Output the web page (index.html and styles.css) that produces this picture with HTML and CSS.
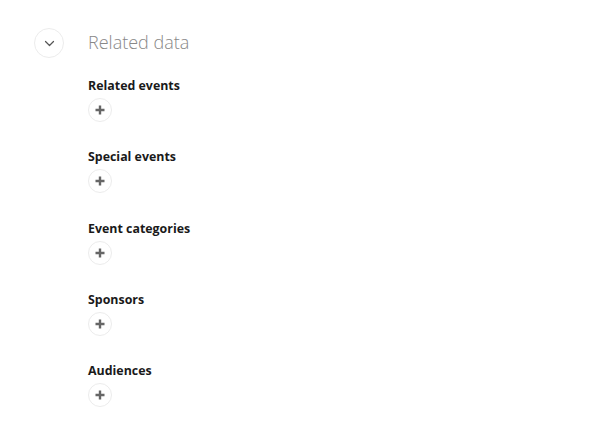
FILE: index.html
```html
<!DOCTYPE html>
<html>
<head>
<meta charset="utf-8">
<link rel="stylesheet" href="styles.css">
</head>
<body>
<section class="panel">
  <div class="panel-head">
    <button class="toggle" aria-label="Collapse">
      <svg width="11" height="7" viewBox="0 0 11 7"><path d="M1.5 1.5 L5.5 5.5 L9.5 1.5" fill="none" stroke="#555" stroke-width="1.2" stroke-linecap="round" stroke-linejoin="round"/></svg>
    </button>
    <h2 class="title">Related data</h2>
  </div>
  <div class="fields">
    <div class="field">
      <div class="label">Related events</div>
      <button class="add" aria-label="Add"><svg width="10" height="10" viewBox="0 0 10 10"><path d="M5 0.5V9.5M0.5 5H9.5" stroke="#666" stroke-width="2.4"/></svg></button>
    </div>
    <div class="field">
      <div class="label">Special events</div>
      <button class="add" aria-label="Add"><svg width="10" height="10" viewBox="0 0 10 10"><path d="M5 0.5V9.5M0.5 5H9.5" stroke="#666" stroke-width="2.4"/></svg></button>
    </div>
    <div class="field">
      <div class="label">Event categories</div>
      <button class="add" aria-label="Add"><svg width="10" height="10" viewBox="0 0 10 10"><path d="M5 0.5V9.5M0.5 5H9.5" stroke="#666" stroke-width="2.4"/></svg></button>
    </div>
    <div class="field">
      <div class="label">Sponsors</div>
      <button class="add" aria-label="Add"><svg width="10" height="10" viewBox="0 0 10 10"><path d="M5 0.5V9.5M0.5 5H9.5" stroke="#666" stroke-width="2.4"/></svg></button>
    </div>
    <div class="field">
      <div class="label">Audiences</div>
      <button class="add" aria-label="Add"><svg width="10" height="10" viewBox="0 0 10 10"><path d="M5 0.5V9.5M0.5 5H9.5" stroke="#666" stroke-width="2.4"/></svg></button>
    </div>
  </div>
</section>
</body>
</html>
```
FILE: styles.css
```css
html, body {
  margin: 0;
  padding: 0;
  background: #fff;
  font-family: "Open Sans", "Liberation Sans", sans-serif;
}
.panel {
  padding: 28px 0 0 34px;
}
.panel-head {
  display: flex;
  align-items: center;
  gap: 24px;
  height: 30px;
}
.toggle {
  width: 30px;
  height: 30px;
  border-radius: 50%;
  border: 1px solid #ececec;
  background: #fff;
  display: flex;
  align-items: center;
  justify-content: center;
  padding: 0;
  margin: 0;
}
.title {
  margin: 0 0 3px;
  font-size: 18px;
  font-weight: 300;
  color: #888;
  line-height: 26px;
}
.fields {
  padding-left: 54px;
  margin-top: 18px;
  display: flex;
  flex-direction: column;
  gap: 25.3px;
}
.field {
  display: flex;
  flex-direction: column;
  align-items: flex-start;
  gap: 2px;
}
.label {
  font-size: 12.4px;
  font-weight: 700;
  color: #1a1a1a;
  line-height: 20px;
}
.add {
  width: 24px;
  height: 24px;
  border-radius: 50%;
  border: 1px solid #ececec;
  background: #fff;
  display: flex;
  align-items: center;
  justify-content: center;
  padding: 0;
  margin: 0;
}
```
